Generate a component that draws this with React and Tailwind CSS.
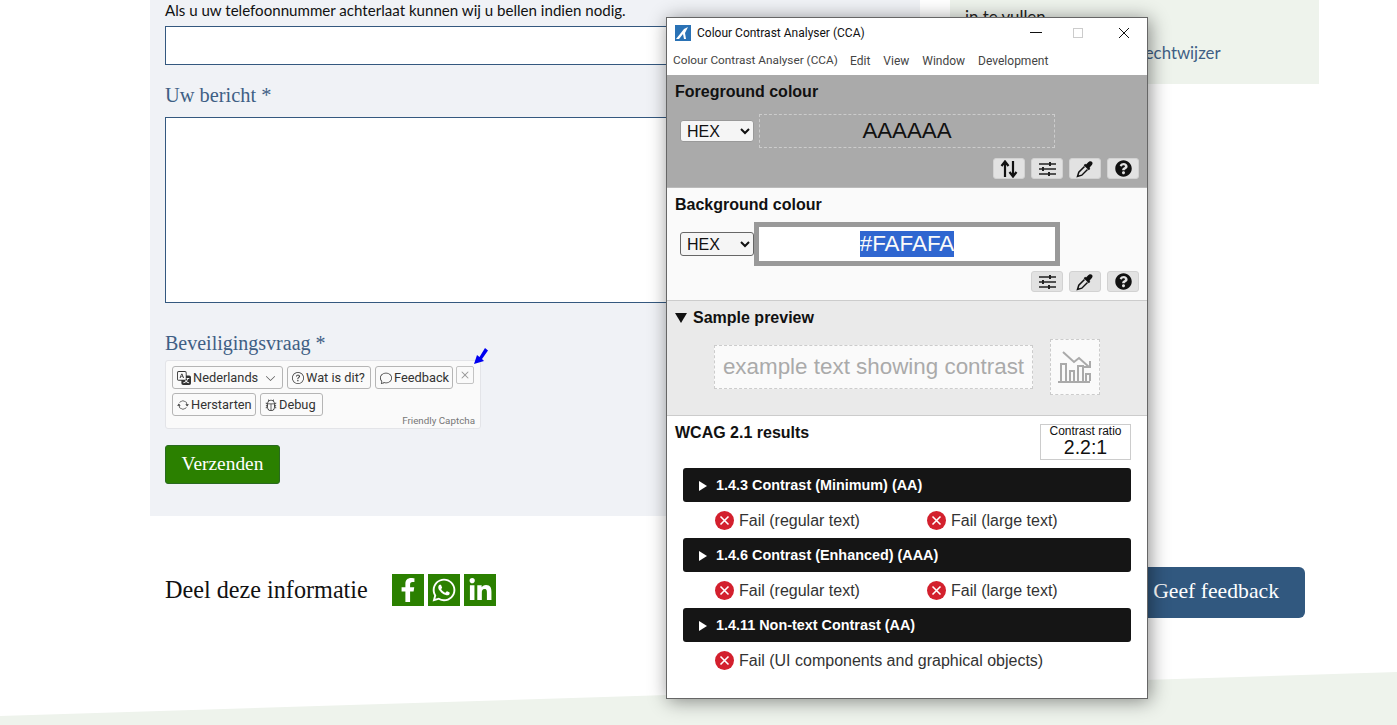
import { BsTranslate, BsQuestionCircle, BsChat, BsArrowRepeat, BsBug, BsX, BsChevronDown } from "react-icons/bs";
import { FaFacebookF, FaWhatsapp, FaLinkedinIn, FaQuestionCircle } from "react-icons/fa";

const serif = "font-['Liberation_Serif',serif]";
const body = "font-['Lato',sans-serif]";
const ui = "font-['Roboto',sans-serif]";

const CaptchaButton = ({ icon, children, className = "" }) => (
  <button className={`flex items-center h-[23px] px-[4px] pt-[1px] gap-[2px] border border-[#b5b5b5] rounded-[3px] bg-[#fafafa] text-[12.8px] text-[#333] whitespace-nowrap ${className}`}>
    <span className="shrink-0">{icon}</span>
    {children}
  </button>
);

const Captcha = () => (
  <div className={`relative w-[316px] h-[69px] bg-[#fafafa] border border-[#e3e4e8] rounded-[3px] pl-[6px] pt-[5px] ${ui}`}>
    <div className="flex gap-[4px]">
      <CaptchaButton icon={<BsTranslate size={14} />} className="w-[111px]">
        Nederlands
        <BsChevronDown size={11} className="ml-auto mr-[2px] text-[#555]" />
      </CaptchaButton>
      <CaptchaButton icon={<BsQuestionCircle size={12} />} className="w-[84px]">Wat is dit?</CaptchaButton>
      <CaptchaButton icon={<BsChat size={12} />} className="w-[78px]">Feedback</CaptchaButton>
      <button className="-ml-[1px] w-[18px] h-[18px] flex items-center justify-center border border-[#c4c4c4] rounded-[2px] text-[#999]">
        <BsX size={16} />
      </button>
    </div>
    <div className="flex gap-[4px] mt-[4px]">
      <CaptchaButton icon={<BsArrowRepeat size={12} />} className="w-[84px]">Herstarten</CaptchaButton>
      <CaptchaButton icon={<BsBug size={12} />} className="w-[63px]">Debug</CaptchaButton>
    </div>
    <span className="absolute right-[5px] bottom-[1px] text-[9.8px] leading-[12px] text-[#777]">Friendly Captcha</span>
    <svg className="absolute left-[307px] -top-[14px]" width="16" height="18" viewBox="0 0 16 18">
      <path d="M1 17 L4 8 L6.5 10 L12 1 L15 3.5 L9 12 L11 14 Z" fill="#0000f0" />
    </svg>
  </div>
);

const FormPanel = () => (
  <div className="w-[770px] h-[516px] bg-[#f0f2f6] px-[15px] shrink-0">
    <p className={`text-[15.1px] leading-[20px] text-[#111] mb-[6px] whitespace-nowrap ${body}`}>
      Als u uw telefoonnummer achterlaat kunnen wij u bellen indien nodig.
    </p>
    <div className="h-[39px] border border-[#34587f] bg-white" />
    <h3 className={`mt-[17px] mb-[9px] text-[20.4px] leading-[26px] text-[#3f5f85] ${serif}`}>Uw bericht *</h3>
    <div className="h-[186px] border border-[#34587f] bg-white" />
    <h3 className={`mt-[27px] mb-[4px] text-[20px] leading-[26px] text-[#3f5f85] ${serif}`}>Beveiligingsvraag *</h3>
    <Captcha />
    <button className={`mt-[16px] w-[115px] h-[39px] pb-[2px] bg-[#2b8000] border border-[#2a6a20] rounded-[3px] text-white text-[19.4px] ${serif}`}>
      Verzenden
    </button>
  </div>
);

const Sidebar = () => (
  <div className={`ml-[30px] w-[369px] h-[84px] bg-[#eef3ec] pl-[15px] overflow-hidden ${body}`}>
    <p className="text-[16.8px] leading-[24px] mt-[5px] text-[#222]">in te vullen</p>
    <p className="text-[16.8px] leading-[24px] mt-[12px] ml-[174px] text-[#3f5f85] whitespace-nowrap">rechtwijzer</p>
  </div>
);

const ShareIcon = ({ children }) => (
  <a className="w-[32px] h-[32px] bg-[#2b8000] text-white flex items-center justify-center">{children}</a>
);

const ShareRow = () => (
  <div className="flex items-start justify-between mt-[51px] pl-[165px] pr-[92px]">
    <div className="flex items-center mt-[7px] h-[32px]">
      <span className={`text-[24.2px] text-[#111] w-[227px] whitespace-nowrap ${serif}`}>Deel deze informatie</span>
      <div className="flex gap-[4px]">
        <ShareIcon><FaFacebookF size={24} /></ShareIcon>
        <ShareIcon><FaWhatsapp size={26} /></ShareIcon>
        <ShareIcon><FaLinkedinIn size={25} /></ShareIcon>
      </div>
    </div>
    <button className={`h-[51px] w-[178px] bg-[#31587f] rounded-[6px] text-white text-[21.7px] text-right pr-[26px] pb-[3px] ${serif}`}>
      Geef feedback
    </button>
  </div>
);

const ToolButton = ({ children }) => (
  <button className="w-[32px] h-[21px] bg-[#e2e2e2] rounded-[3px] flex items-center justify-center text-[#111] border border-[#d2d2d2]">
    {children}
  </button>
);

const SwapIcon = () => (
  <svg width="18" height="18" viewBox="0 0 18 18" fill="none" stroke="#111" strokeWidth="2.2">
    <path d="M5 17V2M1.5 6L5 1.5 8.5 6" />
    <path d="M13 1v15M9.5 12l3.5 4.5 3.5-4.5" />
  </svg>
);

const SlidersIcon = () => (
  <svg width="18" height="16" viewBox="0 0 18 16" fill="none" stroke="#222" strokeWidth="1.6">
    <path d="M1 3h17M1 8h17M1 13h17" />
    <path d="M12 1v4M5 6v4M11 11v4" strokeWidth="2" />
  </svg>
);

const DropperIcon = () => (
  <svg width="18" height="18" viewBox="0 0 18 18">
    <path d="M10 4.5l1.5-1.5c1.5-2 3.2-2.4 4.4-1.2s.8 2.9-1.2 4.4L13.5 8l.8.8-1.5 1.5-5.1-5.1 1.5-1.5z" fill="#111" />
    <path d="M8.5 6.5L2.8 12.2 1.5 16.5l4.3-1.3 5.7-5.7" fill="none" stroke="#111" strokeWidth="1.5" />
  </svg>
);

const Tools = ({ swap }) => (
  <div className="flex justify-end gap-[6px] pr-[8px]">
    {swap && <ToolButton><SwapIcon /></ToolButton>}
    <ToolButton><SlidersIcon /></ToolButton>
    <ToolButton><DropperIcon /></ToolButton>
    <ToolButton><FaQuestionCircle size={17} /></ToolButton>
  </div>
);

const HexSelect = ({ className = "" }) => (
  <select className={`w-[74px] shrink-0 rounded-[3px] text-[16px] text-[#111] pl-[2px] border ${className}`} defaultValue="HEX">
    <option>HEX</option>
  </select>
);

const ChartIcon = () => (
  <svg width="34" height="32" viewBox="0 0 34 32" fill="none" stroke="#aaa" strokeWidth="2">
    <path d="M0 31h32" />
    <path d="M3 30V13h5v17M12 30V20h4v10M20 30V15h5v15M28 30V23h4v7" />
    <path d="M5 1l11 10 5-4 10 9" />
    <path d="M26 16h6v-6" />
  </svg>
);

const FailIcon = () => (
  <svg className="-mt-[2px]" width="19" height="19" viewBox="0 0 19 19">
    <circle cx="9.5" cy="9.5" r="9.5" fill="#d3202d" />
    <path d="M5.5 5.5l8 8M13.5 5.5l-8 8" stroke="#fff" strokeWidth="1.6" />
  </svg>
);

const Fail = ({ children, className = "" }) => (
  <div className={`flex items-center gap-[5px] ${className}`}>
    <FailIcon />
    <span className="text-[16px] text-[#333] whitespace-nowrap">{children}</span>
  </div>
);

const Criterion = ({ title, children }) => (
  <div>
    <div className="ml-[16px] mr-[16px] h-[34px] bg-[#151515] rounded-[3px] flex items-center pl-[16px] pt-[1px] text-white text-[14.4px] font-bold">
      <span className="w-0 h-0 border-y-[5px] border-y-transparent border-l-[8px] border-l-white mr-[9px]" />
      {title}
    </div>
    <div className="h-[36px] pl-[48px] pt-[2px] flex items-center">{children}</div>
  </div>
);

const TitleBar = () => (
  <div className={`h-[28px] flex items-center pl-[8px] pt-[1px] text-[12px] text-[#111] ${ui}`}>
    <svg width="16" height="16" viewBox="0 0 16 16">
      <rect width="16" height="16" fill="#2a72b5" />
      <path d="M1 14L9 4l4-2-3 6 1 6H9L8 9l-4 5z" fill="#fff" />
    </svg>
    <span className="ml-[6px] whitespace-nowrap">Colour Contrast Analyser (CCA)</span>
    <div className="ml-auto flex items-center">
      <span className="w-[12px] h-[1px] bg-[#111]" />
      <span className="ml-[31px] w-[10px] h-[10px] border border-[#ccc]" />
      <svg className="ml-[35px] mr-[17px]" width="12" height="12" viewBox="0 0 12 12" stroke="#111" strokeWidth="1">
        <path d="M1 1l10 10M11 1L1 11" />
      </svg>
    </div>
  </div>
);

const MenuBar = () => (
  <div className={`h-[29px] flex items-center gap-[13px] pl-[6px] text-[12px] text-[#444] bg-white whitespace-nowrap ${ui}`}>
    <span className="w-[164px] text-[11.8px]">Colour Contrast Analyser (CCA)</span>
    <span>Edit</span>
    <span>View</span>
    <span>Window</span>
    <span>Development</span>
  </div>
);

const CcaWindow = () => (
  <div className="absolute left-[666px] top-[17px] w-[482px] h-[682px] bg-white border border-[#666] shadow-[2px_2px_18px_rgba(0,0,0,0.45)] font-['Liberation_Sans',sans-serif] text-[#111]">
    <TitleBar />
    <MenuBar />
    <section className="h-[113px] bg-[#aaaaaa] pt-[8px] border-b border-[#bbb]">
      <h2 className="pl-[8px] text-[16px] leading-[18px] font-bold">Foreground colour</h2>
      <div className="flex items-center mt-[13px] pl-[13px] gap-[5px]">
        <HexSelect className="h-[22px] bg-[#f5f5f5] border-[#999]" />
        <div className="w-[296px] h-[34px] border border-dashed border-[#ccc] flex items-center justify-center text-[22.3px]">AAAAAA</div>
      </div>
      <div className="mt-[10px]"><Tools swap /></div>
    </section>
    <section className="h-[113px] bg-[#fafafa] pt-[8px] border-b border-[#ccc]">
      <h2 className="pl-[8px] text-[16px] leading-[18px] font-bold">Background colour</h2>
      <div className="flex items-center mt-[8px] pl-[13px]">
        <HexSelect className="h-[24px] bg-[#f5f5f5] border-[#666]" />
        <div className="w-[306px] h-[44px] border-[5px] border-[#999] bg-white flex items-center justify-center text-[22.4px]">
          <span className="bg-[#2f66d0] text-[#fafafa] leading-[26px]">#FAFAFA</span>
        </div>
      </div>
      <div className="mt-[5px]"><Tools /></div>
    </section>
    <section className="h-[115px] bg-[#eaeaea] pt-[8px] border-b border-[#ccc]">
      <div className="flex items-center pl-[8px] text-[16px] leading-[18px] font-bold">
        <span className="w-0 h-0 border-x-[6px] border-x-transparent border-t-[10px] border-t-[#111] mr-[6px]" />
        Sample preview
      </div>
      <div className="flex items-center mt-[12px] pl-[47px]">
        <div className="w-[319px] h-[44px] border border-dashed border-[#ccc] bg-[#fafafa] flex items-center justify-center text-[22.4px] text-[#aaa] whitespace-nowrap">
          example text showing contrast
        </div>
        <div className="ml-[17px] w-[50px] h-[56px] border border-dashed border-[#ccc] bg-[#fafafa] flex items-center justify-center">
          <ChartIcon />
        </div>
      </div>
    </section>
    <section className="pt-[8px]">
      <div className="flex justify-between pl-[8px] pr-[16px] h-[44px]">
        <h2 className="text-[16px] leading-[18px] font-bold">WCAG 2.1 results</h2>
        <div className="w-[91px] h-[36px] border border-[#ccc] flex flex-col items-center">
          <span className="text-[12px] leading-[13px]">Contrast ratio</span>
          <span className="text-[19.5px] leading-[20px] -mt-[1px]">2.2:1</span>
        </div>
      </div>
      <Criterion title="1.4.3 Contrast (Minimum) (AA)">
        <Fail className="w-[212px]">Fail (regular text)</Fail>
        <Fail>Fail (large text)</Fail>
      </Criterion>
      <Criterion title="1.4.6 Contrast (Enhanced) (AAA)">
        <Fail className="w-[212px]">Fail (regular text)</Fail>
        <Fail>Fail (large text)</Fail>
      </Criterion>
      <Criterion title="1.4.11 Non-text Contrast (AA)">
        <Fail>Fail (UI components and graphical objects)</Fail>
      </Criterion>
    </section>
  </div>
);

export default function App() {
  return (
    <div className="relative h-[725px] overflow-hidden bg-white">
      <div className="flex items-start pl-[150px]">
        <FormPanel />
        <Sidebar />
      </div>
      <ShareRow />
      <div className="mt-[54px] h-[53px] bg-[#eef3ec] [clip-path:polygon(0_44px,100%_0,100%_100%,0_100%)]" />
      <CcaWindow />
    </div>
  );
}
